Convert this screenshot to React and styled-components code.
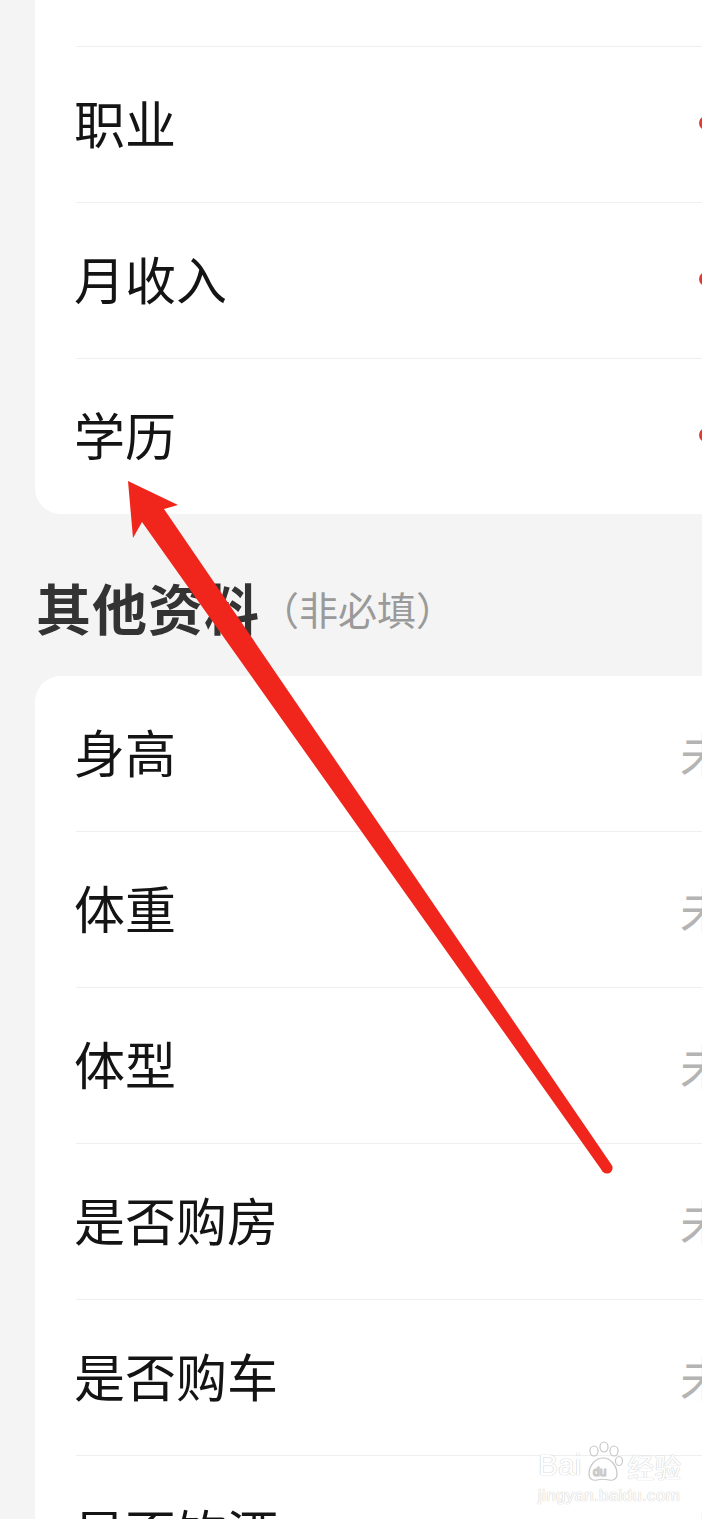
import React from 'react';
import styled, { createGlobalStyle } from 'styled-components';

const GlobalStyle = createGlobalStyle`
  html, body {
    margin: 0;
    padding: 0;
    background: #f4f4f4;
  }
  body {
    font-family: "Noto Sans CJK SC", "Noto Sans", sans-serif;
  }
`;

const Page = styled.div`
  position: relative;
  width: 702px;
  height: 1519px;
  overflow: hidden;
  background: #f4f4f4;
  padding-left: 35px;
  box-sizing: border-box;
`;

const Card = styled.div`
  background: #ffffff;
  margin-right: -40px;
  margin-top: ${p => p.$top || 0}px;
  border-radius: 26px;
  padding-left: 41px;
  overflow: hidden;
`;

const Row = styled.div`
  height: 155px;
  display: flex;
  align-items: center;
  border-bottom: ${p => (p.$last ? 'none' : '1.5px solid #efefef')};
  position: relative;
`;

const Label = styled.span`
  font-size: 51px;
  color: #141414;
  line-height: 1;
  margin-left: -2px;
  margin-top: -4px;
  white-space: nowrap;
`;

const Value = styled.span`
  position: absolute;
  left: 604px;
  font-size: 48px;
  color: #b4b4b4;
  white-space: nowrap;
  margin-top: -4px;
`;

const Dot = styled.span`
  position: absolute;
  left: 623px;
  width: 14px;
  height: 14px;
  border-radius: 50%;
  background: #e23a33;
  margin-top: -4px;
`;

const SectionTitle = styled.div`
  height: 162px;
  display: flex;
  align-items: center;
  margin-left: 1px;
  padding-top: 22px;
  box-sizing: border-box;
`;

const TitleMain = styled.span`
  font-size: 55px;
  font-weight: 700;
  color: #333333;
  letter-spacing: 1px;
`;

const TitleNote = styled.span`
  font-size: 39px;
  color: #9a9a9a;
  margin-top: 4px;
`;

const Arrow = styled.svg`
  position: absolute;
  left: 0;
  top: 0;
  pointer-events: none;
`;

const Watermark = styled.div`
  position: absolute;
  left: 538px;
  top: 1440px;
  display: flex;
  flex-direction: column;
  align-items: flex-start;
  color: #ffffff;
  text-shadow: 0 0 1px #c8c8c8, 0 0 1px #c8c8c8;
  pointer-events: none;
`;

const MarkTop = styled.div`
  display: flex;
  align-items: flex-end;
  font-family: "Liberation Sans", Arial, sans-serif;
  font-size: 30px;
  line-height: 1;
`;

const MarkCn = styled.span`
  font-family: "Noto Sans CJK SC", sans-serif;
  font-size: 27px;
  margin-left: 2px;
`;

const MarkUrl = styled.div`
  font-family: "Liberation Sans", Arial, sans-serif;
  font-size: 17px;
  margin-top: 6px;
  letter-spacing: 0.3px;
`;

const required = [
  { label: '所在地' },
  { label: '职业' },
  { label: '月收入' },
  { label: '学历' },
];

const optional = ['身高', '体重', '体型', '是否购房', '是否购车', '是否饮酒'];

const Paw = () => (
  <svg width="44" height="44" viewBox="0 0 44 44" style={{ marginBottom: -4 }}>
    <g fill="#fff" stroke="#c8c8c8" strokeWidth="1.2">
      <ellipse cx="13" cy="11" rx="4" ry="5" />
      <ellipse cx="23" cy="7" rx="4" ry="5" />
      <ellipse cx="33" cy="11" rx="4" ry="5" />
      <ellipse cx="38" cy="21" rx="3.5" ry="4.5" />
      <path d="M8 34c0-8 6-16 14-16s14 8 14 16c0 5-4 7-8 6-4-1-8-1-12 0-4 1-8-1-8-6z" />
    </g>
    <text x="12" y="36" fontSize="12" fontFamily="Liberation Sans, Arial" fill="#fff" stroke="#c8c8c8" strokeWidth="0.6">du</text>
  </svg>
);

const App = () => (
  <>
    <GlobalStyle />
    <Page>
      <Card $top={-109}>
        {required.map((r, i) => (
          <Row key={r.label} $last={i === required.length - 1}>
            <Label>{r.label}</Label>
            <Dot />
          </Row>
        ))}
      </Card>

      <SectionTitle>
        <TitleMain>其他资料</TitleMain>
        <TitleNote>（非必填）</TitleNote>
      </SectionTitle>

      <Card>
        {optional.map(label => (
          <Row key={label}>
            <Label>{label}</Label>
            <Value>未填写</Value>
          </Row>
        ))}
      </Card>

      <Watermark>
        <MarkTop>
          Bai
          <Paw />
          <MarkCn>经验</MarkCn>
        </MarkTop>
        <MarkUrl>jingyan.baidu.com</MarkUrl>
      </Watermark>

      <Arrow width="702" height="1519" viewBox="0 0 702 1519">
        <polygon
          fill="#f0261d"
          points="128,481 178,505 164,509 611,1164 603,1172 142,522 133,538"
        />
        <circle cx="607" cy="1168" r="5.6" fill="#f0261d" />
      </Arrow>
    </Page>
  </>
);

export default App;
